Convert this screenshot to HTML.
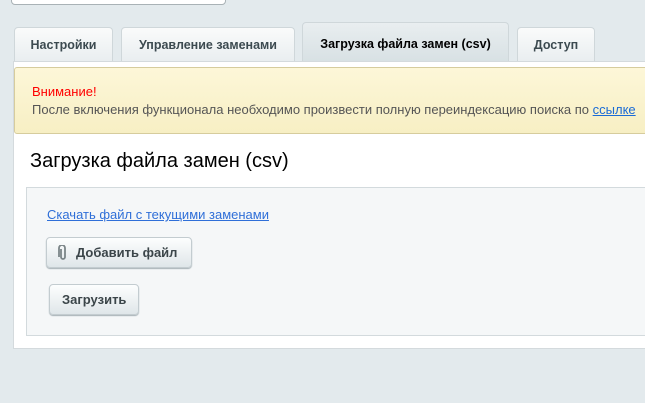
<!DOCTYPE html>
<html><head><meta charset="utf-8"><style>
*{box-sizing:border-box}
body{margin:0;width:645px;height:403px;background:#e3eaed;font-family:"Liberation Sans",Arial,sans-serif;position:relative;overflow:hidden}
.top{position:absolute;left:11px;top:-10px;width:215px;height:15px;background:#fff;border:1px solid #a9b2b6;border-radius:4px}
.tab{position:absolute;top:27px;height:34px;background:linear-gradient(#fafbfb,#e9eef0);border:1px solid #cfd7da;border-bottom:none;border-radius:4px 4px 0 0;font-size:12.5px;font-weight:bold;color:#3c4a50;text-align:center;line-height:34px;white-space:nowrap;overflow:hidden}
.tab.act{top:22px;height:39px;background:linear-gradient(#e9eef0,#d8e1e4);color:#000;line-height:42px}
.panel{position:absolute;left:13px;top:61px;width:640px;height:288px;background:#fff;border:1px solid #d4dadd}
.warn{position:absolute;left:14px;top:67px;width:640px;height:67px;background:linear-gradient(#fdf7d8,#f7efc4);border:1px solid #d6cc9d;border-radius:3px;font-size:13px}
.h{position:absolute;left:30px;top:150px;font-size:20px;color:#000}
.box{position:absolute;left:26px;top:187px;width:630px;height:149px;background:#f5f7f8;border:1px solid #d3dadd}
.btn{position:absolute;height:31px;background:linear-gradient(#fdfefe,#dfe6e9);border:1px solid #c3ccd0;border-radius:4px;box-shadow:0 1px 1px #a5b0b5;font-size:13px;font-weight:bold;color:#3b4549;line-height:29px}
</style></head><body>
<div class="top"></div>
<div class="tab" style="left:14px;width:99px">Настройки</div>
<div class="tab" style="left:121px;width:174px;">Управление заменами</div>
<div class="tab act" style="left:302px;width:207px">Загрузка файла замен (csv)</div>
<div class="tab" style="left:517px;width:78px">Доступ</div>
<div class="panel"></div>
<div class="warn">
<div style="position:absolute;left:17px;top:16px;color:#f00">Внимание!</div>
<div style="position:absolute;left:17px;top:34px;color:#555;white-space:nowrap">После включения функционала необходимо произвести полную переиндексацию поиска по <span style="color:#1a6bd6;text-decoration:underline">ссылке</span></div>
</div>
<div class="h">Загрузка файла замен (csv)</div>
<div class="box"></div>
<div style="position:absolute;left:47px;top:207px;font-size:13px;color:#2f6fd8;text-decoration:underline">Скачать файл с текущими заменами</div>
<div class="btn" style="left:46px;top:237px;width:146px;padding-left:29px">Добавить файл
<svg style="position:absolute;left:11px;top:7px" width="10" height="16" viewBox="0 0 10 16"><path d="M3 4v8a2 2 0 0 0 4 0V3a3 3 0 0 0-6 0v9" fill="none" stroke="#7b8588" stroke-width="1.8"/></svg></div>
<div class="btn" style="left:49px;top:284px;width:90px;padding-left:12px">Загрузить</div>
</body></html>
